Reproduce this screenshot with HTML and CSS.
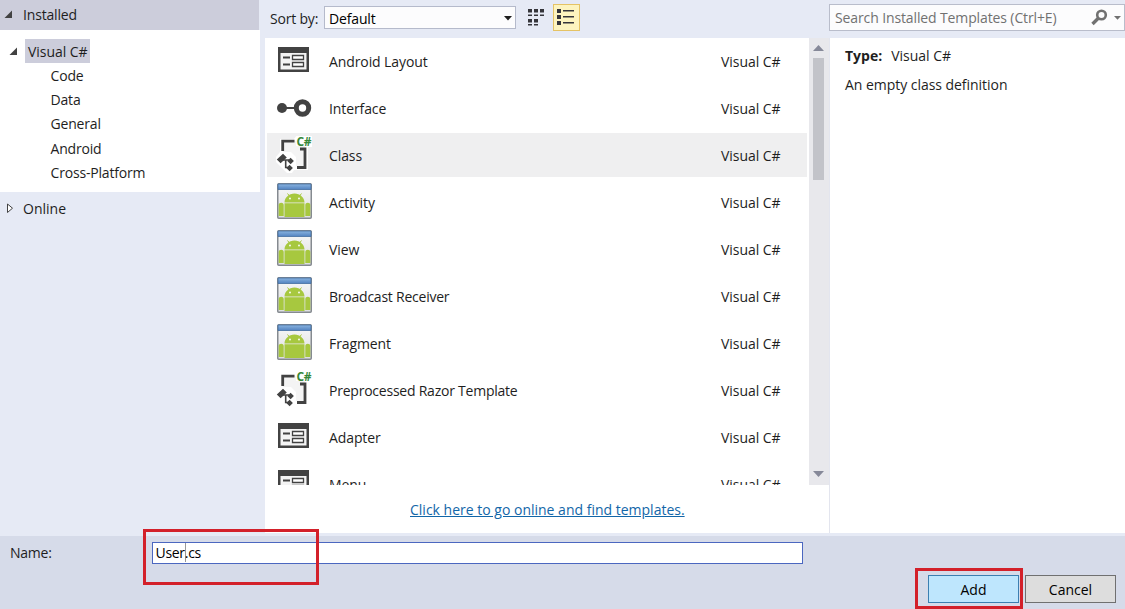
FILE: index.html
```
<!DOCTYPE html>
<html lang="en">
<head>
<meta charset="utf-8">
<title>Add New Item</title>
<link rel="stylesheet" href="styles.css">
</head>
<body>
<svg class="defs" width="0" height="0">
  <defs>
    <linearGradient id="bar" x1="0" y1="0" x2="0" y2="1"><stop offset="0" stop-color="#8ab4e0"/><stop offset="1" stop-color="#5282c0"/></linearGradient>
    <linearGradient id="pane" x1="0" y1="0" x2="0" y2="1"><stop offset="0" stop-color="#f8f8f8"/><stop offset="1" stop-color="#dcdee0"/></linearGradient>
  </defs>
  <symbol id="form" viewBox="0 0 36 38">
    <path fill="#424242" d="M2 5h31v25H2z"/><path fill="#f4f4f4" d="M4.500 11h26v16.500h-26z"/>
    <path fill="#424242" d="M7 14.500h7v2H7zM7 21.500h7v2H7z"/>
    <path fill="#fff" stroke="#424242" stroke-width="1.300" d="M16.500 13.500h11v4h-11zM16.500 20.500h11v4h-11z"/>
  </symbol>
  <symbol id="interface" viewBox="0 0 36 38">
    <circle cx="6" cy="19" r="5" fill="#424242"/><path d="M9 19h12" stroke="#424242" stroke-width="2"/>
    <circle cx="26.500" cy="19" r="6.200" fill="#fff" stroke="#424242" stroke-width="5"/>
  </symbol>
  <symbol id="class" viewBox="0 0 36 38">
    <path fill="#fff" d="M4 3h14l3-4h15v12h-4v23H18l-2 3h-5L0 26v-5l4-5z"/>
    <path fill="#f4f4f4" d="M7 5h13v5h9v20H20v-9l-5-5H7z"/>
    <path fill="none" stroke="#424242" stroke-width="2.800" d="M6.700 15V5.200H18.500M24 13h5v18.500h-8"/>
    <path fill="#424242" d="M.8 23.500l6.200-5.700 3.800 3.700-6.200 5.700zM11.300 25l3.300-3.300 3.300 3.300-3.300 3.300zM10.300 32l3.300-3.300 3.300 3.300-3.300 3.300z"/>
    <path fill="none" stroke="#424242" stroke-width="1.600" d="M6.500 24H13M9.700 24v7.500h3"/>
    <text class="badge" x="20.500" y="9.500" textLength="15">C#</text>
  </symbol>
  <symbol id="android" viewBox="0 0 36 38">
    <rect x=".75" y=".75" width="33.500" height="34.500" rx="1" fill="url(#pane)" stroke="#858a90" stroke-width="1.500"/>
    <path fill="url(#bar)" stroke="#426d9f" stroke-width=".8" d="M1 1h33v5.500H1z"/>
    <path fill="#a7c83f" d="M7.500 19.500c0-5 4.500-9 10-9s10 4 10 9zM7.500 20.300h20V34h-20zM1.700 22c0-3 5-3 5 0v11h-5zM28.300 22c0-3 5-3 5 0v11h-5z"/>
    <path stroke="#a7c83f" d="M12.500 13l-2-2.500M22.500 13l2-2.500"/>
    <circle cx="13" cy="15.500" r=".9" fill="#fff"/><circle cx="22" cy="15.500" r=".9" fill="#fff"/>
  </symbol>
</svg>

<div class="dialog">
  <div class="main">
    <nav class="sidebar">
      <div class="group-head"><svg class="arrow" width="9" height="9"><path d="M8 .5V8H.5z" fill="#424242"/></svg><span>Installed</span></div>
      <div class="tree">
        <div class="tree-root"><svg class="arrow" width="9" height="9"><path d="M8 .5V8H.5z" fill="#424242"/></svg><span class="chosen">Visual C#</span></div>
        <div class="leaf">Code</div>
        <div class="leaf">Data</div>
        <div class="leaf">General</div>
        <div class="leaf">Android</div>
        <div class="leaf">Cross-Platform</div>
      </div>
      <div class="online"><svg width="8" height="11"><path d="M1.500 1v8.500L6.500 5.200z" fill="#fff" stroke="#424242"/></svg><span>Online</span></div>
    </nav>

    <section class="content">
      <div class="toolbar">
        <span class="sort-label">Sort by:</span>
        <div class="select"><span>Default</span><svg width="8" height="5"><path d="M0 0h8L4 4.500z" fill="#1e1e1e"/></svg></div>
        <svg class="tiles" width="17" height="18" fill="#35353a"><path d="M0 1h4v3.500H0zM6 1h4v3.500H6zM12 1h4v3.500h-4zM0 6.500h4V8H0zM6 6.500h4V8H6zM12 6.500h4V8h-4zM0 11h4v3.500H0zM6 11h4v3.500H6zM0 16h4v1.500H0zM6 16h4v1.500H6z"/></svg>
        <div class="list-toggle"><svg width="18" height="17" fill="#35353a"><path d="M0 0h4v4H0zM0 6h4v4H0zM0 12h4v4H0zM6 1h11v1.500H6zM6 7h11v1.500H6zM6 13h11v1.500H6z"/></svg></div>
        <div class="search"><span>Search Installed Templates (Ctrl+E)</span>
          <svg width="17" height="16"><circle cx="10.500" cy="6" r="4.300" fill="none" stroke="#717171" stroke-width="2.600"/><path d="M7.500 9L1.500 15" stroke="#717171" stroke-width="3.400"/></svg>
          <svg class="caret" width="7" height="4"><path d="M0 0h7L3.500 3.800z" fill="#717171"/></svg></div>
      </div>
      <div class="panes">
        <div class="templates">
          <div class="scroller">
            <div class="list">
              <div class="item"><svg><use href="#form"/></svg><span>Android Layout</span><span class="lang">Visual C#</span></div>
              <div class="item"><svg><use href="#interface"/></svg><span>Interface</span><span class="lang">Visual C#</span></div>
              <div class="item selected"><svg><use href="#class"/></svg><span>Class</span><span class="lang">Visual C#</span></div>
              <div class="item"><svg class="app"><use href="#android"/></svg><span>Activity</span><span class="lang">Visual C#</span></div>
              <div class="item"><svg class="app"><use href="#android"/></svg><span>View</span><span class="lang">Visual C#</span></div>
              <div class="item"><svg class="app"><use href="#android"/></svg><span class="tight">Broadcast Receiver</span><span class="lang">Visual C#</span></div>
              <div class="item"><svg class="app"><use href="#android"/></svg><span>Fragment</span><span class="lang">Visual C#</span></div>
              <div class="item"><svg><use href="#class"/></svg><span class="tight">Preprocessed Razor Template</span><span class="lang">Visual C#</span></div>
              <div class="item"><svg><use href="#form"/></svg><span>Adapter</span><span class="lang">Visual C#</span></div>
              <div class="item"><svg><use href="#form"/></svg><span>Menu</span><span class="lang">Visual C#</span></div>
            </div>
            <div class="scrollbar">
              <svg width="11" height="6"><path d="M0 6h11L5.500 0z" fill="#868999"/></svg>
              <div class="thumb"></div>
              <svg class="down" width="11" height="6"><path d="M0 0h11L5.500 6z" fill="#868999"/></svg>
            </div>
          </div>
          <div class="more"><a>Click here to go online and find templates.</a></div>
        </div>
        <aside class="details">
          <p><b>Type:</b><span>Visual C#</span></p>
          <p class="desc">An empty class definition</p>
        </aside>
      </div>
    </section>
  </div>

  <footer class="footer">
    <div class="name-row"><label>Name:</label><div class="name-input"><span>User</span><i class="cursor"></i><span>.cs</span></div></div>
    <div class="buttons"><div class="button add">Add</div><div class="button">Cancel</div></div>
    <div class="mark mark-name"></div>
    <div class="mark mark-add"></div>
  </footer>
</div>
</body>
</html>
```
FILE: styles.css
```
* { box-sizing: border-box; }
body { margin: 0; overflow: hidden; font: 14px/20px "Open Sans", "Noto Sans", sans-serif; color: #1e1e1e; }
svg { display: block; flex: none; overflow: visible; }
.defs { position: absolute; }
.badge { font: bold 12px "Open Sans", sans-serif; fill: #38883a; letter-spacing: 0; }
span, label, a, b { white-space: nowrap; }
.dialog { width: 1125px; height: 609px; display: flex; flex-direction: column; background: #e6eaf5; }
.main { height: 536px; display: flex; gap: 5px; }

.sidebar { width: 260px; flex: none; letter-spacing: -.18px; }
.group-head { width: 259px; height: 30px; background: #cccddb; display: flex; align-items: center; padding-left: 4px; gap: 10px; }
.group-head .arrow { margin-top: -2px; }
.tree { height: 162px; background: #fff; padding-top: 9px; }
.tree-root { display: flex; align-items: center; padding-left: 9px; gap: 7px; height: 24px; }
.chosen { background: #cccddb; height: 24px; line-height: 25px; width: 65px; padding-left: 3px; letter-spacing: -.05px; }
.leaf { height: 24.200px; line-height: 26px; padding-left: 50.500px; }
.online { display: flex; align-items: center; padding: 7px 0 0 6px; gap: 9px; letter-spacing: 0; }
.online svg { margin-top: -2px; }

.content { flex: 1; display: flex; flex-direction: column; }
.toolbar { height: 38px; display: flex; align-items: flex-start; padding: 4px 0 0 5px; }
.sort-label { width: 53px; padding-top: 5px; letter-spacing: -.2px; }
.select { width: 192px; height: 23px; margin: 2px 0 0 1px; border: 1px solid #b5bacb; background: #fcfcfd; display: flex; align-items: center; justify-content: space-between; padding: 2px 3px 0 4px; color: #000; letter-spacing: -.15px; }
.tiles { margin: 4px 0 0 12px; }
.list-toggle { width: 27px; height: 27px; margin-left: 8px; background: #fdf4bf; border: 1px solid #e5c365; padding: 4px 3px; }
.search { width: 296px; height: 27px; margin-left: auto; border: 1px solid #b9bdcb; background: #fcfcfd; color: #717171; display: flex; align-items: center; padding: 1px 3px 0 5px; }
.search span { letter-spacing: -.12px; }
.search svg { margin-left: auto; margin-top: -2px; }
.search .caret { margin: 0 0 0 6px; }

.panes { height: 495px; display: flex; background: #fff; }
.templates { width: 565px; flex: none; border-right: 1px solid #e3e5ee; }
.scroller { height: 447px; display: flex; overflow: hidden; }
.list { width: 544px; padding: 1px 2px 0; }
.item { height: 44px; margin-bottom: 3px; display: flex; align-items: center; padding: 2px 0 0 9px; }
.item svg { width: 36px; height: 38px; margin-top: -3px; }
.item .app { margin-left: 1px; margin-right: -1px; }
.item span { margin-left: 17px; letter-spacing: -.1px; }
.item .tight { letter-spacing: -.23px; }
.item .lang { margin-left: auto; width: 86px; letter-spacing: -.05px; }
.selected { background: #efeff0; }
.scrollbar { width: 20px; background: #e8e8ec; padding: 7px 5px 8px 4px; display: flex; flex-direction: column; }
.thumb { width: 11px; height: 122px; margin-top: 7px; background: #c2c3c9; }
.down { margin-top: auto; }
.more { padding: 15px 0 0 145px; line-height: 20px; }
.more a { color: #1266a8; text-decoration: underline; }
.details { padding: 8px 15px; }
.details p { margin: 0; }
.details span { margin-left: 9px; }
.details .desc { margin-top: 9px; letter-spacing: -.04px; }

.footer { position: relative; flex: 1; background: #d6dbe9; padding-top: 5px; }
.name-row { display: flex; align-items: center; height: 23px; padding-left: 10px; }
.name-row label { width: 142px; letter-spacing: -.25px; }
.name-input { width: 651px; height: 22px; background: #fff; border: 1.500px solid #4b67c0; display: flex; align-items: center; padding-left: 2.500px; color: #000; letter-spacing: -.3px; }
.cursor { width: 1px; height: 19px; margin: 0 -1px 0 0; background: #999; }
.buttons { display: flex; justify-content: flex-end; gap: 6px; padding: 11px 9px 0 0; }
.button { width: 91px; height: 28px; border: 1px solid #707070; background: #ddd; text-align: center; line-height: 28px; color: #000; }
.add { background: #bee6fd; border-color: #3c7fb1; }
.mark { position: absolute; border: 3px solid #d3202a; }
.mark-name { left: 143px; top: -7px; width: 176px; height: 56px; }
.mark-add { left: 915px; top: 32px; width: 108px; height: 41px; }
```
